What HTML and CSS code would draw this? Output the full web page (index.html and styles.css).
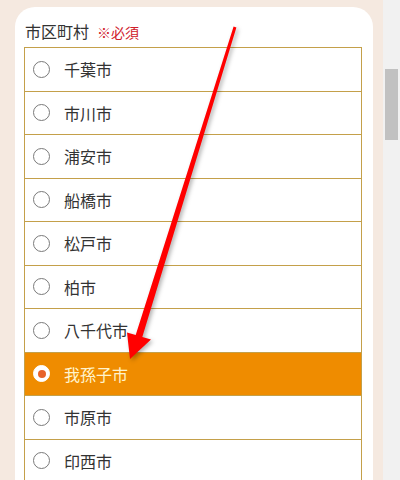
FILE: index.html
```html
<!DOCTYPE html>
<html lang="ja">
<head>
<meta charset="utf-8">
<title>市区町村</title>
<link rel="stylesheet" href="styles.css">
</head>
<body>
<div class="page">
  <div class="content">
    <div class="card">
      <div class="label">市区町村<span class="req">※必須</span></div>
      <div class="list">
        <div class="row"><span class="radio"></span><span class="name">千葉市</span></div>
        <div class="row"><span class="radio"></span><span class="name">市川市</span></div>
        <div class="row"><span class="radio"></span><span class="name">浦安市</span></div>
        <div class="row"><span class="radio"></span><span class="name">船橋市</span></div>
        <div class="row"><span class="radio"></span><span class="name">松戸市</span></div>
        <div class="row"><span class="radio"></span><span class="name">柏市</span></div>
        <div class="row"><span class="radio"></span><span class="name">八千代市</span></div>
        <div class="row selected"><span class="radio"></span><span class="name">我孫子市</span></div>
        <div class="row"><span class="radio"></span><span class="name">市原市</span></div>
        <div class="row"><span class="radio"></span><span class="name">印西市</span></div>
      </div>
    </div>
  </div>
  <div class="scrollbar"><div class="thumb"></div></div>
</div>
<svg class="arrow" width="400" height="480" viewBox="0 0 400 480">
  <polygon points="233.6,26.5 236.4,27.5 142.3,337.1 151,339.5 130,359 127,332.5 135.7,334.9" fill="#ff0000"/>
</svg>
</body>
</html>
```
FILE: styles.css
```css
html, body {
  margin: 0;
  padding: 0;
  height: 100%;
  overflow: hidden;
}
body {
  background: #f5e9e0;
  font-family: "Noto Sans CJK JP", "Noto Sans", sans-serif;
  color: #333333;
  position: relative;
}
.page {
  display: flex;
  height: 480px;
}
.content {
  flex: 1;
  padding: 7px 10px 0 15px;
}
.card {
  background: #ffffff;
  border-radius: 20px 20px 0 0;
  padding: 0 11px 0 9px;
  height: 100%;
  box-sizing: border-box;
}
.label {
  padding-top: 14px;
  padding-left: 1px;
  height: 20px;
  line-height: 20px;
  font-size: 16px;
  margin-bottom: 6px;
  color: #333;
}
.req {
  color: #d0202a;
  font-size: 14px;
  margin-left: 8px;
}
.list {
  border: 1px solid #c4a04a;
  border-bottom: none;
}
.row {
  display: flex;
  align-items: center;
  height: 42.5px;
  border-bottom: 1px solid #c4a04a;
  padding-left: 8px;
  font-size: 16px;
}
.radio {
  width: 15px;
  height: 15px;
  border: 1.5px solid #7a7a7a;
  border-radius: 50%;
  background: #fff;
  flex: none;
  margin-right: 14px;
  box-sizing: content-box;
  position: relative;
}
.row.selected {
  background: #ef8c00;
  color: #fff3cc;
}
.row.selected .radio {
  border-color: #ffffff;
  background: #ffffff;
}
.row.selected .radio::after {
  content: "";
  position: absolute;
  left: 3.5px;
  top: 3.5px;
  width: 8px;
  height: 8px;
  border-radius: 50%;
  background: #e8632a;
}
.name {
  line-height: 20px;
}
.scrollbar {
  width: 17px;
  flex: none;
  background: #f1f1f1;
}
.thumb {
  margin: 69px 2px 0 2px;
  height: 71px;
  background: #c1c1c1;
}
.arrow {
  position: absolute;
  left: 0;
  top: 0;
  filter: drop-shadow(2px 2px 2px rgba(0,0,0,0.3));
  pointer-events: none;
}
```
